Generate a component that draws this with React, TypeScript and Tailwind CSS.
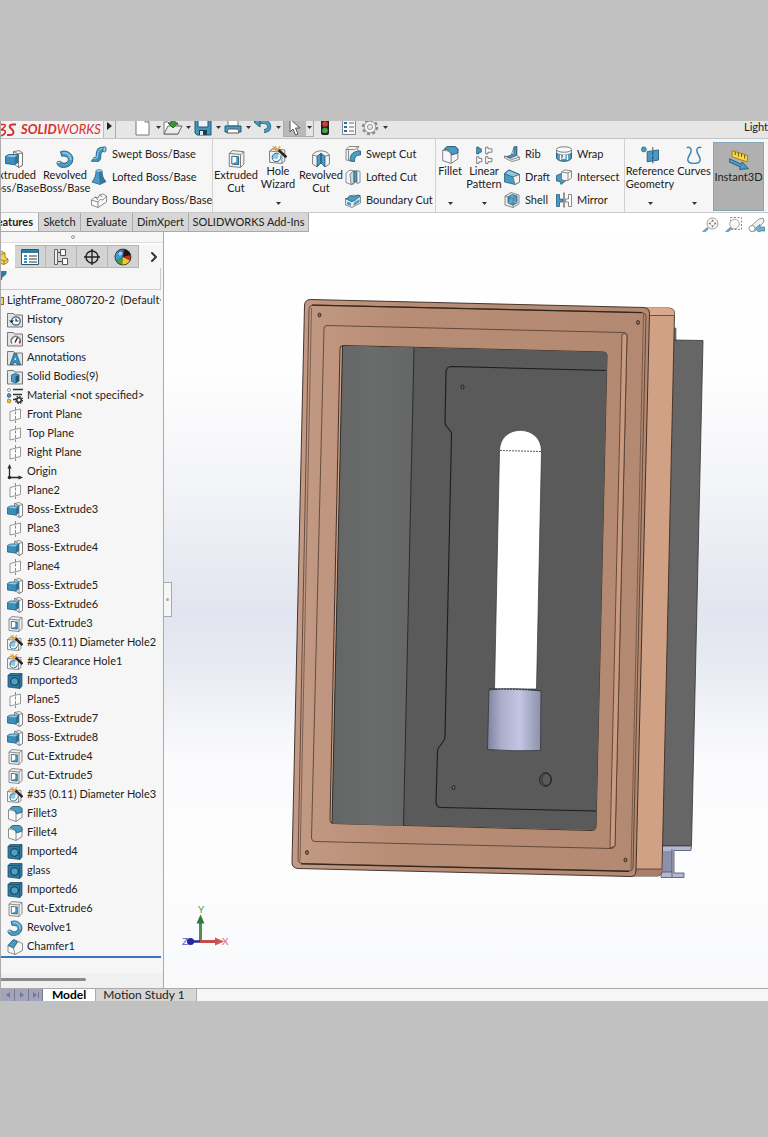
import React, { useState } from 'react';
import { ChevronRight } from 'lucide-react';

type IconName =
  | 'boss' | 'revolve' | 'sweep' | 'loft' | 'boundary' | 'cut' | 'hole' | 'revolveCut' | 'sweepCut'
  | 'loftCut' | 'boundaryCut' | 'fillet' | 'pattern' | 'rib' | 'draft' | 'shell' | 'wrap' | 'intersect'
  | 'mirror' | 'refGeo' | 'curves' | 'instant' | 'history' | 'sensors' | 'annotations' | 'bodies'
  | 'material' | 'plane' | 'origin' | 'imported' | 'chamfer' | 'part';

const BLUE = '#4a9cc4';
const DARK = '#1f5875';
const LIGHT = '#8fc8e3';
const LINE = '#6b6b6b';

const folder = (
  <path d="M.5 3.500V1.500h6l1 1.500h8v12H.5z" fill="#e4e4e4" stroke="#777" strokeWidth="1" />
);

// Every drawing uses a 16x16 box
const DRAWINGS: Record<IconName, React.ReactNode> = {
  boss: (
    <>
      <path d="M7.500 1.500l5-1 3 2v11l-3 2-5-3z" fill="#f4f4f4" stroke={LINE} />
      <path d="M12 3.500v12l3.500-2v-11z" fill="#fff" stroke={LINE} />
      <path d="M12 3.500L7.500 1.500" fill="none" stroke={LINE} />
      <path d="M.5 5.500l3-1.500h8v7l-3 2-8-1z" fill="#3a8fba" stroke={DARK} />
      <path d="M1 5.700l7.500.8 2.700-2.100H3.600z" fill={LIGHT} />
      <path d="M8.700 6.500l2.500-2v6.300l-2.500 1.800z" fill="#2b7399" />
    </>
  ),
  revolve: (
    <>
      <path d="M4 1.500C9-.5 15 3 15 8s-4 7.500-8.500 7.500C3 15.500 1 13.500 1 11.500l3-1.500c1 2 5 2.500 6.500 0S10 5 5 5.500z" fill={BLUE} stroke={DARK} />
      <path d="M6 2.500c4-.5 7.500 2.500 7 6.500" fill="none" stroke={LIGHT} strokeWidth="1.500" />
      <ellipse cx="2.600" cy="11.200" rx="1.800" ry="1.200" fill="#b9dcec" stroke={DARK} strokeWidth=".6" />
    </>
  ),
  sweep: (
    <>
      <path d="M1.500 13c3 2 6 .5 6-3S8 3 12.500 3.500" fill="none" stroke={DARK} strokeWidth="5.600" />
      <path d="M1.500 13c3 2 6 .5 6-3S8 3 12.500 3.500" fill="none" stroke="#3d92bb" strokeWidth="4.400" />
      <path d="M2 12c3 1 4.500-.5 4.500-2.500S7.500 2 12 2.500" fill="none" stroke={LIGHT} strokeWidth="1.200" />
      <ellipse cx="13.500" cy="3.300" rx="1.700" ry="2.700" fill={LIGHT} stroke={DARK} />
    </>
  ),
  loft: (
    <>
      <path d="M5 1.500c1-1 5-1 6 0 0 5 1 8 4 11l-6 3-8-2.500C4 9 5 6 5 1.500z" fill={BLUE} stroke={DARK} />
      <path d="M8 2.500c0 5 0 8 1 12.500 2-1 4-1.500 6-2.500-3-3-4-6-4-11z" fill="#2f789e" />
      <ellipse cx="8" cy="1.700" rx="3" ry="1" fill={LIGHT} />
    </>
  ),
  boundary: (
    <>
      <path d="M.5 8L4 5l3 1 1.500-3L12 2l3.500 2v6L7 15.500.5 13z" fill="#fafafa" stroke={LINE} />
      <path d="M.5 8L7 10v5.500M7 10l2-2.500 3 .5 3.500-4M4 5l3 3M8.500 3l3 2" fill="none" stroke={LINE} />
    </>
  ),
  cut: (
    <>
      <path d="M2 3l3-2.500 10 1v11l-3 3-10-1z" fill="#f1f1f1" stroke={LINE} />
      <path d="M2 3l10 1v11.500M12 4l3-2.500" fill="none" stroke={LINE} />
      <path d="M4.300 5.500l6 .5v7l-6-.5z" fill={BLUE} stroke={DARK} />
      <path d="M4.800 6l3.400.3v4.200L4.800 12z" fill="#fff" />
    </>
  ),
  hole: (
    <>
      <path d="M.5 4.500l2.500-2 11 1v10l-2.500 2-11-1z" fill="#f3f3f3" stroke={LINE} />
      <path d="M.5 4.500l11 1v10" fill="none" stroke={LINE} />
      <circle cx="6.500" cy="10.200" r="3.700" fill={LIGHT} stroke={DARK} />
      <path d="M4 11.500a3 3 0 004.500-4" fill="none" stroke="#fff" strokeWidth="1.500" />
      <path d="M8.500 3.500l7 6.500" stroke="#2a2422" strokeWidth="2.400" />
      <path d="M6 0v5.500M3 2.700h6M10 .2L8 2.500M3.500.5L8 4.500" stroke="#e0a040" strokeWidth="1.100" />
    </>
  ),
  revolveCut: (
    <>
      <path d="M.5 4.500C3-.5 13-.5 15.500 4.500v8l-4 2.500L8 11l-3.500 4-4-2.500z" fill="#f3f3f3" stroke={LINE} />
      <path d="M4.500 5.500L8 3v8.500L4.500 15zM11.500 5.500L8 3v8.500l3.500 3.500z" fill={BLUE} stroke={DARK} />
      <path d="M.5 4.500l4 1M15.500 4.500l-4 1" stroke={LINE} />
    </>
  ),
  sweepCut: (
    <>
      <path d="M1 3.500L4 .5h10l-2 3H12l3.500 2v3C11 8.500 9 11 9 15.500L1 14z" fill="#f1f1f1" stroke={LINE} />
      <path d="M5 15c0-7 3-10 10.500-10v4C11 9 9.500 11 9.500 15.500z" fill={BLUE} stroke={DARK} />
      <path d="M1 3.500h9l3-3M3.500 4v10.500" fill="none" stroke={LINE} />
    </>
  ),
  loftCut: (
    <>
      <path d="M1 4l4-3 4 1v13l-3 .5-5-2z" fill="#f5f5f5" stroke={LINE} />
      <path d="M5 5l4-3.500v12L6 15.500z" fill="#d8d8d8" stroke={LINE} />
      <path d="M9 2h3v11H9z" fill={BLUE} stroke={DARK} />
      <path d="M12 1.500l3 1v11l-3 1z" fill="#f5f5f5" stroke={LINE} />
    </>
  ),
  boundaryCut: (
    <>
      <path d="M.5 7l8-4 7 2v6L7 15.500.5 13z" fill="#eee" stroke={LINE} />
      <path d="M.5 6.500C4 8 3 2 7 4s4-3 8.500 0c-3 3-4 2-5 4S8 8 7 10z" fill={BLUE} stroke={DARK} />
      <path d="M2 9.500l4 1.500v3l-4-1.500zM8.500 11l6-4v3l-6 4z" fill={BLUE} />
    </>
  ),
  fillet: (
    <>
      <path d="M1.500 4l4-3.500h7l2.500 2v9L9 15.500 1.500 13z" fill="#f8f8f8" stroke={LINE} />
      <path d="M3 2.800L5.500.5h7L15 2.500v3.700L9.500 8C9 5 7 3.300 3 2.800z" fill={BLUE} stroke={DARK} />
      <path d="M1.500 4c5 0 7.500 1 7.500 5v6.500" fill="none" stroke={LINE} />
    </>
  ),
  pattern: (
    <>
      <path d="M1.500 1v6h2V5.500h2v-3h-2V1z" fill={BLUE} stroke={DARK} />
      <path d="M9.500 1v6h2V5.500H15v-3h-3.500V1zM1.500 9.500v6h2V14h2.500v-3h-2.500V9.500zM9.500 9.500v6h2V14H15v-3h-3.500V9.500z" fill="#fff" stroke="#666" />
    </>
  ),
  rib: (
    <>
      <path d="M10 1l3-.5v9l2.500 2v2L8 15.500.5 12v-2l6 1.500z" fill="#eee" stroke={LINE} />
      <path d="M10 1v7L3 10.500l3.500 1.500 6-2.500v-9z" fill={BLUE} stroke={DARK} />
      <path d="M.5 10l7.500 3.500 7.500-2.500" fill="none" stroke={LINE} />
    </>
  ),
  draft: (
    <>
      <path d="M.5 4.500L5 1l10.500 4.500V13L11 15.500.5 13z" fill={BLUE} stroke={DARK} />
      <path d="M.5 4.500L5 1l10.500 4.500L9 8z" fill={LIGHT} stroke={DARK} />
      <path d="M9 8l6.500-2.500V13L11 15.500z" fill="#f1f1f1" stroke={LINE} />
    </>
  ),
  shell: (
    <>
      <path d="M1 4l6-3.500L15 3v9l-6 3.500L1 13z" fill="#e9e9e9" stroke={LINE} />
      <path d="M4 5l4-2.500 5 1.500v7L9 13 4 11z" fill={BLUE} stroke={DARK} />
      <path d="M8 2.500V9l-4 2.500M8 9l5 2" fill="none" stroke={LIGHT} />
      <path d="M1 4l8 2.500v9" fill="none" stroke={LINE} />
    </>
  ),
  wrap: (
    <>
      <path d="M.5 3.500v9c2 4 13 4 15 0v-9" fill="#f1f1f1" stroke={LINE} />
      <path d="M.5 7c3 3 12 3 15 0v5c-3 4-12 4-15 0z" fill={BLUE} stroke={DARK} />
      <path d="M4.500 9v5M11.500 9v5M7 9.500l2 .5-2 2h2.500" fill="none" stroke="#fff" strokeWidth="1.300" />
      <ellipse cx="8" cy="3.500" rx="7.500" ry="2.700" fill="#fafafa" stroke="#555" />
    </>
  ),
  intersect: (
    <>
      <path d="M.5 6.500L4 5l6-1v7.500l-5 4-1-3-3.500-.5z" fill={BLUE} stroke={DARK} />
      <path d="M5.500 3L9 .8l6.500 1.200v7L12 11.500H8l-2.500-1z" fill="#f5f5f5" stroke={LINE} />
      <path d="M5.500 3l6.500 1v7.500M12 4l3.500-2" fill="none" stroke={LINE} />
    </>
  ),
  mirror: (
    <>
      <path d="M.5 2.500H3.500V7h3v3h-3v4.500H.5z" fill={BLUE} stroke={DARK} />
      <path d="M15.500 2.500h-3V7h-3v3h3v4.500h3z" fill="#fff" stroke="#666" />
      <path d="M8 .5v15" stroke="#333" strokeWidth="1" />
    </>
  ),
  refGeo: (
    <>
      <path d="M5.500 5l10-1.500v9L5.500 14z" fill={BLUE} stroke={DARK} />
      <path d="M10.500 1v14.500" stroke="#235" strokeDasharray="3 1" />
      <circle cx="2.500" cy="3" r="2.200" fill={BLUE} stroke={DARK} strokeWidth=".6" />
    </>
  ),
  curves: (
    <path d="M1.500 1.500c2-1 4 0 4 2.500 0 3-3 5-3 8s3 3.500 5.500 3.500 5.500-.5 5.500-3.500-3-5-3-8c0-2.500 2-3.500 4-2.500" fill="none" stroke="#3b86ae" strokeWidth="1.300" />
  ),
  instant: (
    <>
      <path d="M2.500.5l12.500 4-.5 5-12-4z" fill="#f8d94c" stroke="#a2730d" strokeWidth=".7" />
      <path d="M5 1.500V4M7.500 2.200v3M10 3v2.500M12.500 3.800v3" stroke="#76520a" strokeWidth=".8" />
      <path d="M.5 7l9.500 4.500.5-2 5 5.500-7 .5.500-2L0 9.500z" fill={BLUE} stroke={DARK} strokeWidth=".7" />
    </>
  ),
  history: (
    <>
      {folder}
      <circle cx="9" cy="9" r="4.200" fill="#fff" stroke="#2a6584" strokeWidth="1.300" />
      <path d="M9 6.500V9h2.500" fill="none" stroke="#222" strokeWidth="1.200" />
      <path d="M2 8.500h5L4.500 11z" fill="#222" />
    </>
  ),
  sensors: (
    <>
      {folder}
      <path d="M5 12.500a4.500 4.500 0 117.500 0" fill="#fff" stroke="#777" strokeWidth="1.400" />
      <path d="M8 11.500l2.500-5" stroke="#222" strokeWidth="1.400" />
      <path d="M12 12l1.500-2.500" stroke="#d33" strokeWidth="1.500" />
    </>
  ),
  annotations: (
    <>
      {folder}
      <path d="M7 3.500h2.500l4 11H10l-.6-2H7l-.8 2H3z" fill="#3a8fba" stroke={DARK} />
      <path d="M7.500 10h1.500L8.300 7z" fill="#fff" />
    </>
  ),
  bodies: (
    <>
      {folder}
      <path d="M4.500 6l4-1.500L12 6v6l-3.500 2-4-1.500z" fill={BLUE} stroke={DARK} />
      <path d="M8.500 7.500L12 6v6l-3.500 2z" fill={DARK} />
    </>
  ),
  material: (
    <>
      <path d="M6 1.500h10M6 6.500h9M6 11.500h4" stroke="#333" strokeWidth="1.400" />
      <circle cx="2" cy="2" r="1.600" fill="#eee" stroke="#888" />
      <circle cx="2" cy="7.500" r="1.900" fill="#4a90c4" stroke="#28587a" />
      <circle cx="2" cy="13" r="1.900" fill="#f2c230" stroke="#9b7410" />
      <circle cx="12" cy="12" r="2.300" fill="#fff" stroke="#333" strokeWidth="1.600" />
      <circle cx="12" cy="12" r="3.600" fill="none" stroke="#333" strokeWidth="1.200" strokeDasharray="1.500 1.300" />
    </>
  ),
  plane: (
    <>
      <path d="M3 4.500L13.500 2v9.500L3 14z" fill="#fcfcfc" stroke="#777" />
      <path d="M8.500 0v16" stroke="#666" strokeDasharray="3 1.500" />
    </>
  ),
  origin: (
    <>
      <path d="M2.500 13.500V3M2.500 13.500H13" stroke="#2b2b2b" strokeWidth="1.300" />
      <path d="M2.500 0l2 4.500h-4zM16 13.500l-4.500 2v-4z" fill="#2b2b2b" />
      <circle cx="2.500" cy="13.500" r="1.800" fill="#2b2b2b" />
    </>
  ),
  imported: (
    <>
      <path d="M1 2.500L3 .5h12v12.500l-2 2.500L1 14z" fill="#327a9f" stroke="#184b66" />
      <path d="M1 2.500h11.500l2.500-2M12.500 2.500v13" fill="none" stroke="#184b66" />
      <circle cx="7.500" cy="8.500" r="3.800" fill="#4f9fc5" stroke="#123c52" strokeWidth="1.100" />
    </>
  ),
  chamfer: (
    <>
      <path d="M1 6.500L7 .5l8.500 4v7L8 15.500 1 13z" fill="#f6f6f6" stroke={LINE} />
      <path d="M1 6.500L6 .8l4.500 2L6.500 9z" fill={BLUE} stroke={DARK} />
      <path d="M6.500 9L8 15.500M6.500 9l4-6" fill="none" stroke={LINE} />
    </>
  ),
  part: (
    <>
      <path d="M2 4l5-2.500L12 4v4l3 2v3l-4 2.500L2 13z" fill="#f6d548" stroke="#8c6b10" />
      <path d="M2 4l5 2 5-2M7 6v4l4 2 4-2M11 12v3.500" fill="none" stroke="#8c6b10" />
    </>
  ),
};

const Icon = ({ name, size = 'w-4 h-4' }: { name: IconName; size?: string }) => (
  <svg viewBox="0 0 16 16" strokeWidth=".75" className={`shrink-0 ${size}`} aria-hidden="true">
    {DRAWINGS[name]}
  </svg>
);

const Caret = () => (
  <svg viewBox="0 0 5 3" className="w-[5px] h-[3px] shrink-0" aria-hidden="true">
    <path d="M0 0h5L2.500 3z" fill="#333" />
  </svg>
);

// ---------- Title bar ----------

const QUICK_TOOLS: { label: string; drawing: React.ReactNode }[] = [
  {
    label: 'New',
    drawing: <path d="M3 1h9l4 4v13H3zM12 1v4h4" fill="#fff" stroke="#777" />,
  },
  {
    label: 'Open',
    drawing: (
      <>
        <path d="M1 5h4l2 2h8v10H1z" fill="#fff" stroke="#777" />
        <path d="M1 17L5 9h14l-4 8z" fill="#ececec" stroke="#666" />
        <path d="M8 1h4v5h3l-5 5-5-5h3z" fill="#3e9434" stroke="#2a6a22" />
      </>
    ),
  },
  {
    label: 'Save',
    drawing: (
      <>
        <path d="M2 2h16v16H4l-2-2z" fill="#4b93b9" stroke="#1f5875" />
        <path d="M5 2h10v8H5z" fill="#eaf3f7" stroke="#1f5875" />
        <path d="M6 13h8v5H6z" fill="#173f55" />
        <path d="M7 14h3v4H7z" fill="#dfeaf0" />
      </>
    ),
  },
  {
    label: 'Print',
    drawing: (
      <>
        <path d="M5 2h10v7H5z" fill="#fff" stroke="#777" />
        <path d="M2 9h16v6H2z" fill="#4a9cc4" stroke="#1f5875" />
        <path d="M5 12h10l1 4H4z" fill="#fff" stroke="#555" />
      </>
    ),
  },
  {
    label: 'Undo',
    drawing: (
      <>
        <path d="M4 5h7c7 0 7 9 0 9" fill="none" stroke="#1f5875" strokeWidth="4" />
        <path d="M4 5h7c7 0 7 9 0 9" fill="none" stroke="#4a9cc4" strokeWidth="2.800" />
        <path d="M1 5l6-4v9z" fill="#4a9cc4" stroke="#1f5875" />
      </>
    ),
  },
];

const TitleBar = () => (
  <header className="flex h-[18px] overflow-hidden bg-[#e6e6e6] border-b border-[#c4c4c4]">
    <div className="w-[103px] h-full shrink-0 flex items-center overflow-hidden bg-[#f3f3f3] border-r border-[#bbb] text-[#d6302c]">
      <svg viewBox="0 0 16 14" className="w-4 h-[14px] shrink-0" role="img" aria-label="DS logo">
        <path d="M0 1.500h3c2 0 1.500 1.500.5 2.500L0 7M0 7h2c4 0 3 5-3 6" fill="none" stroke="currentColor" strokeWidth="1.500" />
        <path d="M15 1.500h-3.500c-3 0-3.500 2-2 3.500l2 2c2 2 1 5-2 5H6" fill="none" stroke="currentColor" strokeWidth="2" />
      </svg>
      <span className="pl-1 text-[13px] italic"><b>SOLID</b>WORKS</span>
    </div>
    <button aria-label="Expand menu" className="w-3 h-full shrink-0 flex items-start justify-center pt-[1px] border-r border-[#aaa]">
      <svg viewBox="0 0 5 8" className="w-[5px] h-2"><path d="M0 0l5 4-5 4z" fill="#222" /></svg>
    </button>
    <div className="flex items-center h-3 pl-[17px] shrink-0">
      {QUICK_TOOLS.map((tool) => (
        <button key={tool.label} aria-label={tool.label} className="w-[30px] flex items-center gap-[3px]">
          <svg viewBox="0 0 20 20" className="w-5 h-5 shrink-0">{tool.drawing}</svg>
          <Caret />
        </button>
      ))}
      <button aria-label="Select" className="flex items-center h-5 border border-[#aaa]">
        <span className="w-[22px] h-full flex items-center justify-center bg-[#b9b9b9]">
          <svg viewBox="0 0 12 18" className="w-3 h-[18px]">
            <path d="M1 1v13l3-3 2.500 6 2.500-1-2.500-6h4.500z" fill="#fff" stroke="#555" />
          </svg>
        </span>
        <span className="w-[7px] flex justify-center"><Caret /></span>
      </button>
      <button aria-label="Rebuild" className="w-[22px] flex justify-center">
        <svg viewBox="0 0 8 16" className="w-2 h-4">
          <rect width="8" height="16" rx="2" fill="#222" />
          <circle cx="4" cy="5" r="2.800" fill="#d23b33" />
          <circle cx="4" cy="11.500" r="2.800" fill="#3fa844" />
        </svg>
      </button>
      <button aria-label="File Properties" className="w-[25px] flex justify-center">
        <svg viewBox="0 0 14 16" className="w-[14px] h-4">
          <path d="M.5.500h13v15H.5z" fill="#fafafa" stroke="#889" />
          <path d="M2 3h3v2H2zM2 7h3v2H2zM2 11h3v2H2z" fill="#2b6e94" />
          <path d="M7 4h5M7 8h5M7 12h5" stroke="#666" />
        </svg>
      </button>
      <button aria-label="Options" className="flex items-center gap-1">
        <svg viewBox="0 0 18 18" className="w-[18px] h-[18px]">
          <circle cx="9" cy="9" r="7" fill="none" stroke="#888" strokeWidth="2.400" strokeDasharray="3 2.500" />
          <circle cx="9" cy="9" r="5.800" fill="#f2f2f2" stroke="#888" strokeWidth=".8" />
          <circle cx="9" cy="9" r="2.600" fill="#e6e6e6" stroke="#888" strokeWidth=".8" />
        </svg>
        <Caret />
      </button>
    </div>
    <span className="ml-auto w-6 h-3 flex items-center shrink-0 whitespace-nowrap text-[#222]">LightF</span>
  </header>
);

// ---------- Ribbon ----------

interface BigToolProps {
  icon: IconName;
  lines: string[];
  width: string;
  menu?: boolean;
}

const BigTool = ({ icon, lines, width, menu }: BigToolProps) => (
  <button className={`shrink-0 flex flex-col items-center text-center hover:bg-[#e2eef6] ${width} ${menu ? 'pt-[7px]' : 'pt-[11px]'}`}>
    <Icon name={icon} size="w-[18px] h-[18px]" />
    {lines.map((line) => (
      <span key={line} className="leading-[13px] whitespace-nowrap">{line}</span>
    ))}
    {menu && <span className="mt-auto pb-[7px]"><Caret /></span>}
  </button>
);

const ToolList = ({ items, width }: { items: [IconName, string][]; width: string }) => (
  <div className={`shrink-0 flex flex-col gap-px pt-1 ${width}`}>
    {items.map(([icon, label]) => (
      <button key={label} className="h-[22px] flex items-center gap-[5px] whitespace-nowrap hover:bg-[#e2eef6]">
        <Icon name={icon} />
        {label}
      </button>
    ))}
  </div>
);

const Divider = () => <div className="w-px shrink-0 bg-[#d0d0d0]" />;

const Ribbon = () => (
  <div className="flex h-[74px] overflow-hidden bg-[#f6f6f6] border-b border-[#c9c9c9]">
    <div className="flex -ml-3">
      <BigTool icon="boss" lines={['Extruded', 'Boss/Base']} width="w-[50px]" />
      <BigTool icon="revolve" lines={['Revolved', 'Boss/Base']} width="w-[52px]" />
    </div>
    <ToolList items={[['sweep', 'Swept Boss/Base'], ['loft', 'Lofted Boss/Base'], ['boundary', 'Boundary Boss/Base']]} width="w-[121px]" />
    <Divider />
    <BigTool icon="cut" lines={['Extruded', 'Cut']} width="w-[46px]" />
    <BigTool icon="hole" lines={['Hole', 'Wizard']} width="w-[38px]" menu />
    <BigTool icon="revolveCut" lines={['Revolved', 'Cut']} width="w-[48px]" />
    <ToolList items={[['sweepCut', 'Swept Cut'], ['loftCut', 'Lofted Cut'], ['boundaryCut', 'Boundary Cut']]} width="w-[90px]" />
    <Divider />
    <BigTool icon="fillet" lines={['Fillet']} width="w-[28px]" menu />
    <BigTool icon="pattern" lines={['Linear', 'Pattern']} width="w-[40px]" menu />
    <ToolList items={[['rib', 'Rib'], ['draft', 'Draft'], ['shell', 'Shell']]} width="w-[52px]" />
    <ToolList items={[['wrap', 'Wrap'], ['intersect', 'Intersect'], ['mirror', 'Mirror']]} width="w-[68px]" />
    <Divider />
    <BigTool icon="refGeo" lines={['Reference', 'Geometry']} width="w-[50px]" menu />
    <BigTool icon="curves" lines={['Curves']} width="w-[38px]" menu />
    <button aria-pressed="true" className="w-[51px] h-[69px] mt-[3px] shrink-0 flex flex-col items-center pt-[7px] bg-[#b0b0b0] border border-[#87a5b8]">
      <Icon name="instant" size="w-5 h-5" />
      <span className="leading-[13px]">Instant3D</span>
    </button>
  </div>
);

const TABS = [
  { label: 'Features', width: 'w-[38px]' },
  { label: 'Sketch', width: 'w-[42px]' },
  { label: 'Evaluate', width: 'w-[52px]' },
  { label: 'DimXpert', width: 'w-[56px]' },
  { label: 'SOLIDWORKS Add-Ins', width: 'w-[120px]' },
];

const CommandTabs = () => {
  const [active, setActive] = useState('Features');
  return (
    <nav className="flex h-[19px] bg-white">
      {TABS.map(({ label, width }) => (
        <button
          key={label}
          onClick={() => setActive(label)}
          className={`shrink-0 flex items-center overflow-hidden whitespace-nowrap border-r border-b border-[#aaa] ${width} ${
            label === 'Features' ? 'justify-end pr-[5px]' : 'justify-center'
          } ${active === label ? 'bg-[#f8f8f8] font-bold' : 'bg-[#d6d6d6]'}`}
        >
          {label}
        </button>
      ))}
      <div className="ml-auto flex items-center gap-[6px] pt-[6px] pr-[3px]">
        <button aria-label="Zoom to Fit">
          <svg viewBox="0 0 17 17" className="w-[17px] h-[17px]">
            <path d="M6 11l-5 4.500" stroke="#6ba3c1" strokeWidth="2.600" />
            <circle cx="10.500" cy="6.500" r="5.500" fill="#fafafa" stroke="#999" />
            <path d="M10.500 2.500l1.500 2h-3zM10.500 10.500l1.500-2h-3zM6.500 6.500l2-1.500v3zM14.500 6.500l-2-1.500v3z" fill="#666" />
          </svg>
        </button>
        <button aria-label="Zoom to Area">
          <svg viewBox="0 0 17 17" className="w-[17px] h-[17px]">
            <path d="M6 11l-5 4.500" stroke="#6ba3c1" strokeWidth="2.600" />
            <path d="M5.500.5h11v12h-11z" fill="none" stroke="#888" strokeDasharray="2 1.500" />
            <circle cx="9.500" cy="7" r="4.800" fill="#f8f8f8" stroke="#aaa" />
          </svg>
        </button>
        <button aria-label="Previous View">
          <svg viewBox="0 0 17 17" className="w-[17px] h-[17px]">
            <path d="M1 11L11 2l4-1 1 4-9 9-4 1z" fill="#f1f1f1" stroke="#999" />
            <circle cx="4" cy="11.500" r="3" fill="#fff" stroke="#999" />
            <path d="M7 11.500l5-4v2.500h5v4h-5v2.500z" fill="#6fb0d2" stroke="#2f6f94" strokeWidth=".6" />
          </svg>
        </button>
      </div>
    </nav>
  );
};

// ---------- Feature tree ----------

const TREE: [IconName, string][] = [
  ['history', 'History'],
  ['sensors', 'Sensors'],
  ['annotations', 'Annotations'],
  ['bodies', 'Solid Bodies(9)'],
  ['material', 'Material <not specified>'],
  ['plane', 'Front Plane'],
  ['plane', 'Top Plane'],
  ['plane', 'Right Plane'],
  ['origin', 'Origin'],
  ['plane', 'Plane2'],
  ['boss', 'Boss-Extrude3'],
  ['plane', 'Plane3'],
  ['boss', 'Boss-Extrude4'],
  ['plane', 'Plane4'],
  ['boss', 'Boss-Extrude5'],
  ['boss', 'Boss-Extrude6'],
  ['cut', 'Cut-Extrude3'],
  ['hole', '#35 (0.11) Diameter Hole2'],
  ['hole', '#5 Clearance Hole1'],
  ['imported', 'Imported3'],
  ['plane', 'Plane5'],
  ['boss', 'Boss-Extrude7'],
  ['boss', 'Boss-Extrude8'],
  ['cut', 'Cut-Extrude4'],
  ['cut', 'Cut-Extrude5'],
  ['hole', '#35 (0.11) Diameter Hole3'],
  ['fillet', 'Fillet3'],
  ['fillet', 'Fillet4'],
  ['imported', 'Imported4'],
  ['imported', 'glass'],
  ['imported', 'Imported6'],
  ['cut', 'Cut-Extrude6'],
  ['revolve', 'Revolve1'],
  ['chamfer', 'Chamfer1'],
];

const MANAGER_TABS: { label: string; drawing: React.ReactNode }[] = [
  {
    label: 'PropertyManager',
    drawing: (
      <>
        <path d="M.5 1.500h17v15H.5z" fill="#fff" stroke="#2c5871" />
        <path d="M1 2h16v3H1z" fill="#2f7ba3" />
        <path d="M3 7h3v2H3zM3 10h3v2H3zM3 13h3v2H3z" fill="#3d8fba" />
        <path d="M8 8h8M8 11h8M8 14h8" stroke="#333" />
      </>
    ),
  },
  {
    label: 'ConfigurationManager',
    drawing: (
      <>
        <path d="M5 4.500h4M5 13.500h5" fill="none" stroke="#444" />
        <path d="M2.500 1.500h3v15h-3z" fill="#eee" stroke="#666" />
        <path d="M8.500 1.500h5v6h-5zM10.500 10.500h5v6h-5z" fill="#fff" stroke="#555" />
      </>
    ),
  },
  {
    label: 'DimXpertManager',
    drawing: (
      <>
        <circle cx="9" cy="9" r="6" fill="none" stroke="#222" strokeWidth="1.400" />
        <path d="M9 1v16M1 9h16" stroke="#222" strokeWidth="1.400" />
      </>
    ),
  },
  {
    label: 'DisplayManager',
    drawing: (
      <>
        <circle cx="9" cy="9" r="8" fill="#2a1414" />
        <path d="M9 9L3 3.500A8 8 0 0110 1z" fill="#2e6fc4" />
        <path d="M9 9L3 3.500A8 8 0 002 13z" fill="#3d9ad0" />
        <path d="M9 9L2 13a8 8 0 006 4z" fill="#3ea13c" />
        <path d="M9 9l-1 8a8 8 0 008-4.500z" fill="#f0c92c" />
        <path d="M9 9l7 3.500A8 8 0 0016.800 7z" fill="#c6302b" />
        <circle cx="6.500" cy="5.500" r="2" fill="#fff" opacity=".6" />
        <circle cx="9" cy="9" r="8" fill="none" stroke="#333" strokeWidth=".8" />
      </>
    ),
  },
];

const FeatureTree = () => {
  const [selected, setSelected] = useState<string | null>(null);
  return (
    <aside className="w-[163px] shrink-0 flex flex-col bg-[#f6f6f6] border-r border-[#a9a9a9]">
      <div className="h-[11px] flex items-center justify-center pr-[18px] border-b border-[#ddd]">
        <i className="w-1 h-1 rounded-full border border-[#999]" />
      </div>
      <div className="flex h-[25px] pt-[2px] bg-white">
        <button aria-label="FeatureManager" className="w-[14px] shrink-0 flex items-center justify-end overflow-hidden pr-[6px]">
          <Icon name="part" />
        </button>
        {MANAGER_TABS.map((tab) => (
          <button key={tab.label} aria-label={tab.label} className="w-[31px] shrink-0 flex items-center justify-center bg-[#d3d3d3] border border-l-0 border-[#b5b5b5]">
            <svg viewBox="0 0 18 18" className="w-[18px] h-[18px]">{tab.drawing}</svg>
          </button>
        ))}
        <button aria-label="More" className="grow flex items-center justify-center pl-[5px] bg-[#f6f6f6]">
          <ChevronRight className="w-4 h-4" color="#333" strokeWidth={3} />
        </button>
      </div>
      <label className="h-[22px] mr-[2px] flex items-start pt-[3px] border-r border-b border-[#ccc]">
        <svg viewBox="0 0 6 9" className="w-[6px] h-[9px] shrink-0" aria-hidden="true">
          <path d="M0 0h5.500v3L1 7v2H0z" fill="#2f7ba3" />
        </svg>
        <input aria-label="Filter" className="grow min-w-0 bg-transparent outline-none" />
      </label>
      <ul className="mr-[2px] mt-px border-b-2 border-[#3a74c0]">
        <li className="h-[19px] flex items-center overflow-hidden whitespace-pre">
          <i className="w-[3px] h-2 mr-[3px] shrink-0 bg-[#f1d36b] border border-l-0 border-[#8c6b10]" />
          LightFrame_080720-2  (Default&lt;&lt;
        </li>
        {TREE.map(([icon, label]) => (
          <li key={label}>
            <button
              onClick={() => setSelected(label)}
              className={`w-full h-[19px] flex items-center gap-1 pl-[6px] whitespace-nowrap ${selected === label ? 'bg-[#cde4f5]' : ''}`}
            >
              <Icon name={icon} />
              {label}
            </button>
          </li>
        ))}
      </ul>
      <div className="grow" />
      <div className="h-[15px] pt-[5px] bg-[#f0f0f0]">
        <div className="w-[85px] h-[3px] rounded-r bg-[#8a8a8a]" />
      </div>
    </aside>
  );
};

// ---------- Graphics area ----------

const Screw = ({ x, y }: { x: number; y: number }) => (
  <ellipse cx={x} cy={y} rx="1.500" ry="2" fill="#8c6e5e" stroke="#2d221c" strokeWidth=".8" />
);

const Model = () => (
  <svg viewBox="164 232 604 756" preserveAspectRatio="xMinYMin slice" className="block w-full h-full" role="img" aria-label="LightFrame model">
    <defs>
      <linearGradient id="face" x1="0" x2="1">
        <stop offset="0" stopColor="#c39a85" />
        <stop offset=".3" stopColor="#b88d75" />
        <stop offset="1" stopColor="#b48971" />
      </linearGradient>
      <linearGradient id="wall" x1="0" x2="1" y2="0">
        <stop offset="0" stopColor="#646665" />
        <stop offset=".5" stopColor="#6a6c6b" />
        <stop offset="1" stopColor="#656766" />
      </linearGradient>
      <linearGradient id="socket" x1="0" x2="1">
        <stop offset="0" stopColor="#7f829d" />
        <stop offset=".25" stopColor="#aaaecb" />
        <stop offset=".6" stopColor="#c2c6e2" />
        <stop offset="1" stopColor="#8d90aa" />
      </linearGradient>
    </defs>

    {/* housing and bracket */}
    <path d="M674 328h2v14h-2z" fill="#6f7f8b" stroke="#444" strokeWidth=".6" />
    <path d="M662 846h29.500l-.5 4.500h-17v22.500h10v4.500H661z" fill="#b4b7d3" stroke="#4c4e5c" strokeWidth=".8" />
    <path d="M663 851h9v21h-9z" fill="#8c90a8" />
    <path d="M672 849v28M662 872h10" stroke="#4c4e5c" strokeWidth=".8" />
    <path d="M672 340l31 .5-11.500 505H660z" fill="#666" stroke="#333" strokeWidth=".8" />

    {/* side of the frame */}
    <path d="M646 308h23q6 .5 5.500 6L662 871q-.5 5-5 5h-26z" fill="#d0a184" stroke="#3d2c22" strokeWidth=".9" />
    <path d="M646 308h23q6 .5 5.500 7.500H649z" fill="#d9a98b" />
    <path d="M636 869h26q0 7-5 7h-22z" fill="#a87e66" />
    <path d="M649 315.500h25.500M636 869h26" stroke="#3d2c22" strokeWidth=".7" />

    {/* front face with its stepped edges */}
    <path d="M304.500 305q.5-5.500 6-5.500L644 307.500q5.500.5 5.500 6L636 871q-.5 6-6 5.500l-332-8q-6-.5-6-6z" fill="url(#face)" stroke="#33261e" strokeWidth=".9" />
    <path d="M309 309q.5-4 4-4l329 7.500q4 .5 4 4L633 867q-.5 4-4 4l-327-7.500q-4-.5-4-4z" fill="none" stroke="#4c382d" strokeWidth=".8" />
    <path d="M312 305.200l330 7.500M301 863.800l328 7.500" stroke="#33261e" strokeWidth="1.300" />
    <path d="M311.500 308L300 861M643.500 314L631 869" stroke="#5e4637" strokeWidth=".7" />
    <path d="M324 328.500q0-3 3-3L623 332.500q4.500 0 4 4L615 845q-.5 3.500-4 3.500L315 841.500q-3.500 0-3.500-3.500z" fill="none" stroke="#4c382d" strokeWidth=".8" />
    <path d="M622 334.500q3-2 5 .5L615 846l-5 2z" fill="#cb9b80" stroke="#4c382d" strokeWidth=".8" />
    <Screw x={319.5} y={315} />
    <Screw x={638} y={322.500} />
    <Screw x={307} y={852.500} />
    <Screw x={625.5} y={860} />

    {/* opening */}
    <path d="M340 349q0-3.500 3-3.500L604 352q3 .5 3 3.500L596 827q-.5 3.500-3.500 3.500L333 823.500q-3-.5-3-3z" fill="#d2a187" stroke="#33261e" strokeWidth=".9" />
    <path d="M342.500 346L604 352q3 .5 3 3.500L596 827q-.5 3-3.500 3L332 823.500z" fill="#5a5a5a" />
    <path d="M342.500 346L414 348l-10.500 478L332 823.500z" fill="url(#wall)" />
    <path d="M342.500 346L332 823.500M414 348l-10.500 478" stroke="#252525" strokeWidth=".9" />
    <path
      d="M606 370.500L451.500 366.500q-5.500 0-5.500 6L445 422.500q0 2 1.500 3.500l4 5.500q1.500 1.500 1 4L445 736q0 3-1.500 5l-5 7q-1 1.500-1 4l-1.500 50q0 5.500 5.500 5.500L596 811"
      fill="none"
      stroke="#1c1c1c"
      strokeWidth="1.100"
    />
    <ellipse cx="462.500" cy="387" rx="1.500" ry="2" fill="#666" stroke="#151515" strokeWidth=".8" />
    <ellipse cx="453.500" cy="787.500" rx="1.500" ry="2" fill="#666" stroke="#151515" strokeWidth=".8" />
    <ellipse cx="545.500" cy="779.500" rx="5.800" ry="6.800" fill="#5a5a5a" stroke="#1c1c1c" />
    <ellipse cx="546.500" cy="779.500" rx="4.600" ry="6" fill="none" stroke="#1c1c1c" strokeWidth=".7" />

    {/* lamp */}
    <path d="M499.500 451c0-28 42-27 42 0l-5 238H494.500z" fill="#fff" stroke="#333" strokeWidth=".7" />
    <path d="M500 450.500l41.500 1" stroke="#444" strokeWidth=".9" strokeDasharray="2 1" />
    <path d="M489 690q25-3 52 1l-.5 59.500q-26 1-53-1z" fill="url(#socket)" stroke="#33343e" strokeWidth=".8" />
    <path d="M489 688.500l52 2" stroke="#33343e" strokeWidth=".9" strokeDasharray="2 1" />

    {/* axis triad */}
    <path d="M200.500 941v-20" stroke="#4f8f52" strokeWidth="3" />
    <path d="M200.500 914.500l4 9h-8z" fill="#2f7a35" />
    <path d="M200 941.500h16" stroke="#c94a4a" strokeWidth="3" />
    <path d="M224 941.500l-9 4v-8z" fill="#cf5555" />
    <path d="M191 941.500h9" stroke="#2a2aa0" strokeWidth="2.500" />
    <circle cx="190.500" cy="941.500" r="3.600" fill="#2427a4" />
    <g fontSize="10">
      <text x="198" y="913" fill="#4e9b52">Y</text>
      <text x="222" y="945" fill="#dd6666">X</text>
      <text x="182" y="945" fill="#5a5ac8">Z</text>
    </g>
  </svg>
);

const Viewport = () => (
  <main className="relative grow min-w-0 overflow-hidden bg-[linear-gradient(#fefefe_18%,#f3f4f8_34%,#e2e5ef_50%,#e6e9f1_56%,#fbfbfd_70%,#fdfdfe_85%,#f8f9fb)]">
    <div className="absolute inset-0"><Model /></div>
    <button aria-label="Collapse panel" className="absolute -left-px top-[350px] w-[9px] h-[35px] flex items-center justify-center bg-[#f6f6f6] border border-l-0 border-[#a9a9a9]">
      <i className="w-[3px] h-[3px] rounded-full bg-[#aaa]" />
    </button>
  </main>
);

const BottomTabs = () => (
  <footer className="flex h-[13px] overflow-hidden bg-[#f6f6f6] border-t border-[#aaa] text-xs">
    {['M5 1L1 4l4 3z', 'M1 1l4 3-4 3z', 'M0 1l4 3-4 3zM5 1h1v6H5z'].map((d) => (
      <button key={d} aria-label="Scroll tabs" className="w-[14px] shrink-0 flex items-center justify-center bg-[#a3a3bd] border-r border-[#77778f]">
        <svg viewBox="0 0 6 8" className="w-[6px] h-2"><path d={d} fill="#77778f" /></svg>
      </button>
    ))}
    <button className="w-[53px] shrink-0 flex items-center justify-center bg-white border-r border-[#aaa] font-bold text-black">Model</button>
    <button className="w-[101px] shrink-0 flex items-center justify-center pr-1 bg-[#d6d6d6] border-r border-[#aaa] whitespace-nowrap">Motion Study 1</button>
  </footer>
);

const App = () => (
  <div className="min-h-screen flex flex-col bg-[#c1c1c1] pt-[121px] pb-[136px] font-['Lato','Noto_Sans',sans-serif] text-[11px] text-[#222]">
    <div className="grow flex flex-col overflow-hidden border-l border-[#aaa]">
      <TitleBar />
      <Ribbon />
      <CommandTabs />
      <div className="grow flex">
        <FeatureTree />
        <Viewport />
      </div>
      <BottomTabs />
    </div>
  </div>
);

export default App;
